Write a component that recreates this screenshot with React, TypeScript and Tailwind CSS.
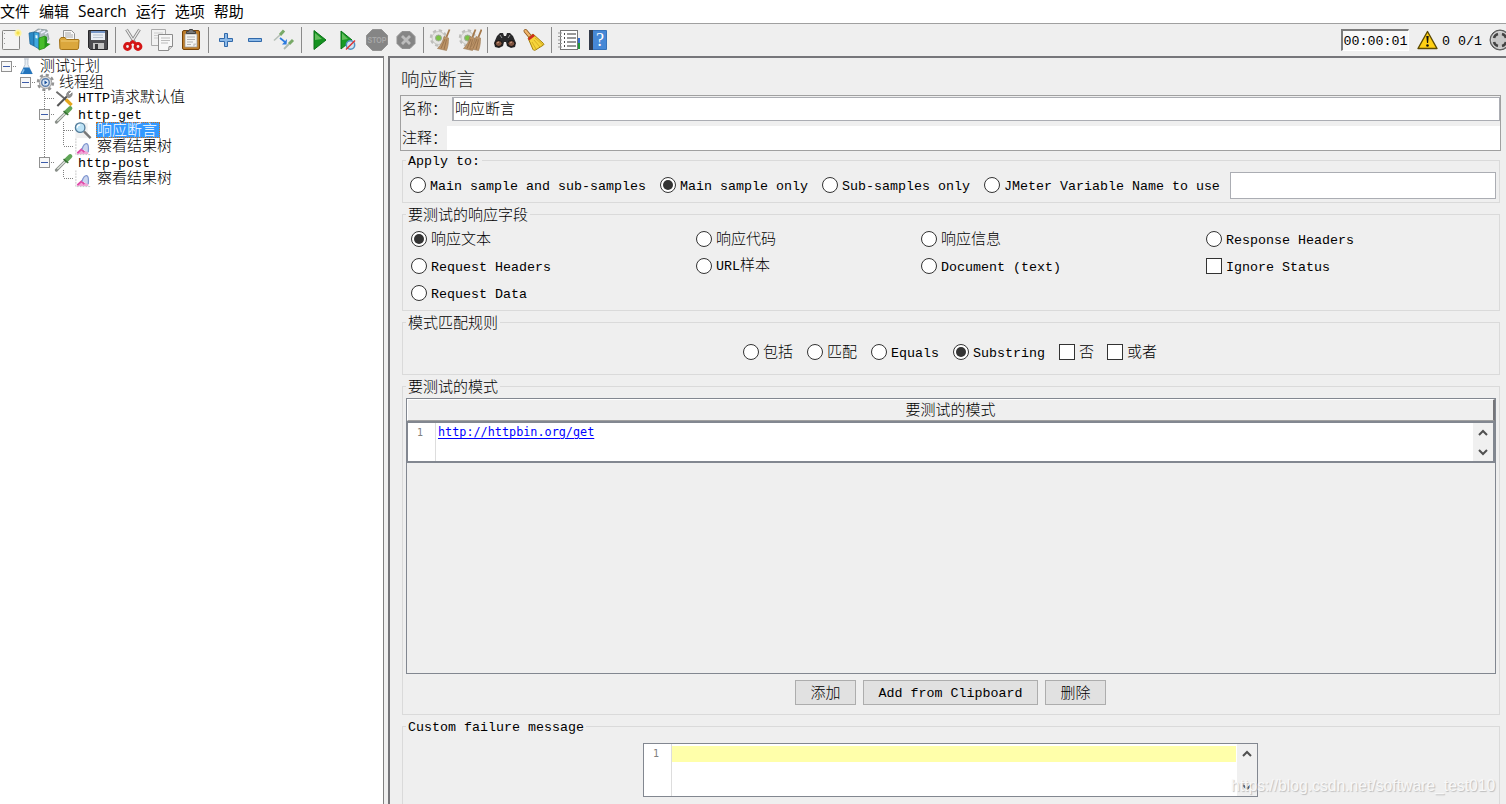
import type { ReactNode } from 'react';

type TreeRow = {
  label: string;
  icon: keyof typeof treeIcons;
  cells: string[];
  selected?: boolean;
};

/* Latin runs are set in an 8px wide mono face, Chinese runs in 15px glyphs */
function Txt({ children }: { children: string }) {
  const runs = children.split(/([\u2e80-\uffef]+)/).filter(Boolean);
  const hasHan = /[\u2e80-\uffef]/.test(children);
  return (
    <span className={`block leading-none whitespace-pre ${hasHan ? 'pb-[2px]' : 'pb-[1px]'}`}>
      {runs.map((run, i) =>
        /[\u2e80-\uffef]/.test(run) ? (
          <span key={i} className="font-['Noto_Sans_CJK_SC',sans-serif] text-[15px] leading-none font-light">
            {run}
          </span>
        ) : (
          <span key={i} className="font-['Liberation_Mono',monospace] text-[13.33px] leading-none">
            {run}
          </span>
        ),
      )}
    </span>
  );
}

function Icon({ children }: { children: ReactNode }) {
  return (
    <button className="flex h-8 w-[29px] shrink-0 items-center justify-center">
      <svg className="h-6 w-6 shrink-0" viewBox="0 0 24 24" fill="none">
        {children}
      </svg>
    </button>
  );
}

function Separator() {
  return (
    <div className="flex h-8 w-1.5 shrink-0 items-center justify-center">
      <div className="h-[26px] w-px bg-[#8a8a8a]" />
    </div>
  );
}

const broom = (
  <>
    <path d="M21.500 1.500 18.500 9" stroke="#a5784a" strokeWidth="1.800" />
    <path d="M16 8.500 20.500 10C20.500 15 20 19 18.500 22.500L9.500 20.500C13 17 15 13 16 8.500Z" fill="#bd9468" stroke="#9b7751" strokeWidth=".6" />
    <path d="M17 11 13 20.500M18.500 11.500 16 21.500" stroke="#8b6743" strokeWidth=".7" />
  </>
);

const paleGear = (
  <>
    <circle cx="9.500" cy="10" r="7.200" stroke="#bdbdba" strokeWidth="3" strokeDasharray="3.200 2.450" />
    <circle cx="9.500" cy="10" r="6.500" fill="#e6e6e3" stroke="#c6c6c2" />
    <circle cx="9.500" cy="10" r="3" fill="#7cc445" stroke="#9fa69a" />
  </>
);

function Toolbar() {
  return (
    <div className="flex h-8 w-full items-center overflow-hidden bg-[#efefef]">
      <div className="-ml-[3.5px] flex shrink-0 items-center">
        <Icon>
          <rect x="3.500" y="2.500" width="17" height="19" rx=".8" fill="#f3f3f3" stroke="#858583" />
          <path d="M5.500 5v14" stroke="#999" strokeDasharray="1 4" />
          <circle cx="19" cy="5" r="3.500" fill="#fcf3a0" />
          <circle cx="19" cy="5" r="1.700" fill="#f4df4a" />
        </Icon>
        <Icon>
          <path d="m6 4 4-3 9 1 2 9-3 4H9Z" fill="#aebcc0" stroke="#7b8a90" strokeWidth=".7" />
          <path d="m9 4 4-2m0 3 4-2m0 3 3-2" stroke="#eef" strokeWidth="1.500" />
          <path d="m1 5 5-1v14l-4-2Z" fill="#2b8ac6" stroke="#1a6397" strokeWidth=".7" />
          <path d="m6 4 5 1v16l-5-3Z" fill="#3fa9df" stroke="#1a6397" strokeWidth=".7" />
          <path d="m11 10 6-2v12l-6 2Z" fill="#47bd2a" stroke="#238311" strokeWidth=".7" />
          <path d="m17 8 2 1v6l3.500 1-5.500 4Z" fill="#24941b" />
          <path d="m7.500 7 2 .5v3l-2-.5Z" fill="#e4f4fc" />
        </Icon>
        <Icon>
          <path d="M6.500 2.500h8l3 3V13h-11Z" fill="#f8f8f8" stroke="#929292" />
          <path d="M8 5h6M8 7h8M8 9h8" stroke="#aaa" />
          <path d="M2.500 11.500 4 9.500h4l1.500 2H21c1 0 1.200.5 1 1.500l-.5 7c-.2 1-.7 1.500-1.500 1.500H4.500c-1 0-1.500-.5-1.600-1.500Z" fill="#dba73d" stroke="#a37319" />
          <path d="M4 13h17" stroke="#f0ca73" />
        </Icon>
        <Icon>
          <path d="M2.500 2.500h19v19H4.500l-2-2Z" fill="#4c4c50" stroke="#28282b" />
          <path d="M5 3h14v9H5Z" fill="#e9eef5" />
          <path d="M5 3h14v2H5Z" fill="#7596c8" />
          <path d="M7 7h10M7 9.500h10" stroke="#b8c2cf" />
          <path d="M7 15h11v6H7Z" fill="#c3c3c3" />
          <path d="M9 16h3v5H9Z" fill="#37373a" />
        </Icon>
        <Separator />
        <Icon>
          <path d="M5.500 1.500 14 15M18.500 1.500 10 15" stroke="#888" strokeWidth="3" />
          <path d="M5.500 1.500 14 15M18.500 1.500 10 15" stroke="#eee" strokeWidth="1.300" />
          <ellipse cx="6.500" cy="18.500" rx="2.900" ry="2.900" stroke="#d41515" strokeWidth="3" />
          <ellipse cx="17" cy="18.500" rx="2.900" ry="2.900" stroke="#d41515" strokeWidth="3" />
          <path d="m8 16.500 3.800-3 3.700 3" stroke="#d41515" strokeWidth="2.800" />
        </Icon>
        <Icon>
          <path d="M1.500 1.500h14v16h-14Z" fill="#f1f1f1" stroke="#aaa" />
          <path d="M4 5h9M4 7.500h9M4 10h5" stroke="#ccc" />
          <path d="M8.500 6.500h14v12l-4 4h-10Z" fill="#f7f7f7" stroke="#8c8c8c" />
          <path d="M11 10h9M11 12.500h9M11 15h7" stroke="#bbb" />
          <path d="m18.500 22.500.5-4h3.500" fill="#ddd" stroke="#8c8c8c" />
        </Icon>
        <Icon>
          <rect x="3.500" y="2.500" width="17" height="19" rx="1.500" fill="#bd7d2a" stroke="#75430a" />
          <path d="M6 6h12v13H6Z" fill="#f4f4f2" stroke="#999" strokeWidth=".7" />
          <path d="M8 9h8M8 11.500h8M8 14h6M8 16.500h4" stroke="#b3b3b3" />
          <path d="M7.500 5.500v-2h2l1-2h3l1 2h2v2Z" fill="#777" stroke="#444" />
          <path d="m14 19 .5-3.500H18" fill="#c5c5c5" />
        </Icon>
        <Separator />
        <Icon>
          <path d="M10.500 5.500h3v5h5v3h-5v5h-3v-5h-5v-3h5Z" fill="#8bb9e8" stroke="#3169aa" />
        </Icon>
        <Icon>
          <path d="M5.500 10.500h13v3h-13Z" fill="#8bb9e8" stroke="#3169aa" />
        </Icon>
        <Icon>
          <path d="M2 12.500 8 7" stroke="#b6bfb7" strokeWidth="1.600" />
          <path d="m8 7 4-4.500" stroke="#78a967" strokeWidth="3" />
          <path d="m12 21 5-5" stroke="#aebbb0" strokeWidth="1.800" />
          <path d="m17 16 4-4" stroke="#78a967" strokeWidth="3" />
          <path d="m8 10 5 4" stroke="#2c7be0" strokeWidth="1.700" />
          <path d="m15 11-.5 5.500H10Z" fill="#2c7be0" />
        </Icon>
        <Separator />
        <Icon>
          <path d="M7 2.500 19 12 7 21.500Z" fill="#159220" stroke="#087315" />
          <path d="m8 5 7 6-7 1Z" fill="#63bd5c" />
        </Icon>
        <Icon>
          <path d="M5 3 16 12 5 21Z" fill="#179b25" stroke="#087315" />
          <path d="m6 5 6 6-6 1Z" fill="#63bd5c" />
          <circle cx="14.500" cy="17" r="4.200" fill="#d4e4f2" stroke="#5191c3" strokeWidth="1.500" />
          <path d="m10 21.500 9-9" stroke="#df3434" strokeWidth="1.400" />
        </Icon>
        <Icon>
          <path d="M7.500 1.500h9l6 6v9l-6 6h-9l-6-6v-9Z" fill="#858585" stroke="#929292" />
          <text x="12" y="15.300" textAnchor="middle" fontSize="9" textLength="19" lengthAdjust="spacingAndGlyphs" fontWeight="bold" fontFamily="Liberation Sans" fill="#a8a8a8">STOP</text>
        </Icon>
        <Icon>
          <path d="M8 3.500h8l5 5v7l-5 5H8l-5-5v-7Z" fill="#858585" stroke="#929292" />
          <path d="m8 8 8 8M16 8l-8 8" stroke="#bcbcbc" strokeWidth="2.800" />
        </Icon>
        <Separator />
        <Icon>
          {paleGear}
          <g transform="translate(-1 0)">{broom}</g>
        </Icon>
        <Icon>
          {paleGear}
          <g transform="translate(-4 0)">{broom}</g>
          <g transform="translate(2 0)">{broom}</g>
        </Icon>
        <Separator />
        <Icon>
          <path d="M7 5h3l1 3h2l1-3h3l3 3 3 7-1 4-4 1-4-2-1-4h-2l-1 4-4 2-4-1-1-4 3-7Z" fill="#29292b" />
          <path d="m7 7 2 3M17 7l-2 3" stroke="#999" />
          <ellipse cx="5.700" cy="15.500" rx="3.500" ry="3" fill="#805540" stroke="#111" />
          <ellipse cx="18.300" cy="15.500" rx="3.500" ry="3" fill="#805540" stroke="#111" />
          <path d="m4 15 2-1M17 15l2-1" stroke="#d6a388" />
        </Icon>
        <Icon>
          <path d="m3.500 3 5 6" stroke="#8d571d" strokeWidth="4" strokeLinecap="round" />
          <path d="m3.500 3 5 6" stroke="#f0b56b" strokeWidth="2.400" strokeLinecap="round" />
          <path d="m6 10 5-4 10 9c1 1 1 1.500.5 2l-8 5c-1 .5-2 .4-2.500-.5Z" fill="#f5d43a" stroke="#a37f0b" />
          <path d="m6 10 5-4 2 2-6 4.500Z" fill="#ce2d20" />
          <path d="m10 14 4 7m-2-9 6 7m-5-9 8 7" stroke="#d1a51b" strokeWidth=".8" />
        </Icon>
        <Separator />
        <Icon>
          <path d="M20 10h3v5h-3Z" fill="#346fd1" />
          <path d="M20 15h3v6h-3Z" fill="#229939" />
          <rect x="3.500" y="2.500" width="17" height="19" fill="#fff" stroke="#777" />
          <path d="M7 6h1m-1 4h1m-1 4h1m-1 4h1" stroke="#111" strokeWidth="1.500" />
          <path d="M10 6h9M10 10h9M10 14h9M10 18h9" stroke="#333" strokeWidth="1.100" />
          <path d="M1 5h4M1 8.500h4M1 12h4M1 15.500h4M1 19h4" stroke="#999" />
        </Icon>
        <Icon>
          <path d="M3.500 2.500h17v19h-17Z" fill="#4688d6" stroke="#3672b9" />
          <path d="M3 2h4v20H3Z" fill="#333b4a" />
          <text x="14" y="18" textAnchor="middle" fontSize="18" fontFamily="Liberation Serif" fill="#fff">?</text>
        </Icon>
      </div>

      <div className="ml-auto -mr-[5px] flex shrink-0 items-center">
        <div className="flex h-[22px] w-[68px] items-center justify-center border border-t-2 border-l-2 border-t-[#7b7b7b] border-r-white border-b-white border-l-[#7b7b7b] bg-[#f8f8f8]">
          <Txt>00:00:01</Txt>
        </div>
        <svg className="ml-2 h-5 w-[21px]" viewBox="0 0 21 20">
          <path d="M10.500 1.500 20 18.500H1Z" fill="#ffd013" stroke="#5d4a00" strokeWidth="1.400" strokeLinejoin="round" />
          <path d="M9.300 6h2.400l-.6 7H10Z" fill="#111" />
          <circle cx="10.500" cy="15.500" r="1.300" fill="#111" />
        </svg>
        <div className="ml-1 flex w-11 gap-2">
          <Txt>0</Txt>
          <Txt>0/1</Txt>
        </div>
        <svg className="ml-[3px] h-[22px] w-[22px]" viewBox="0 0 22 22" fill="none">
          <circle cx="11" cy="11" r="10" fill="#777" stroke="#555" />
          <circle cx="11" cy="11" r="8.500" fill="#c7c7c7" stroke="#e0e0e0" />
          <path d="M5 9c.5-2 2-3.500 4-4M13 5c2 .5 3.500 2 4 4M17 13c-.5 2-2 3.500-4 4M9 17c-2-.5-3.500-2-4-4" stroke="#444" strokeWidth="2.600" />
        </svg>
      </div>
    </div>
  );
}

const treeIcons = {
  flask: (
    <>
      <path d="M8 2h5M9 2v6L4.500 17.500h12L12 8V2" fill="#e8eef4" stroke="#b9c3ce" />
      <path d="m7.500 11-3.500 7h13l-3.500-7Z" fill="#2375bd" />
      <path d="m8 13-2 4" stroke="#88c1ed" strokeWidth="1.500" />
    </>
  ),
  gear: (
    <>
      <circle cx="10.500" cy="10" r="7.800" stroke="#949494" strokeWidth="2.800" strokeDasharray="3.200 2.930" />
      <circle cx="10.500" cy="10" r="6.500" fill="#d9d9d9" stroke="#9d9d9d" />
      <circle cx="10.500" cy="10" r="4" fill="#dfeaf6" stroke="#5a7dac" strokeWidth="1.500" />
      <path d="m9.500 8 3 2-3 2Z" fill="#174f9c" />
    </>
  ),
  tools: (
    <>
      <path d="m2 3 12 10" stroke="#6c6c6c" strokeWidth="2" />
      <path d="M3 18 13 8" stroke="#555" strokeWidth="2.200" />
      <path d="M17 2.500 14.500 5l1.500 1.500L18.500 4c.5 3-1 5-4 5-2-1-2.500-3-1-5 1-1.500 2-2 3.500-1.500Z" fill="#999" stroke="#666" strokeWidth=".7" />
      <path d="m12 11 6 6" stroke="#e4a61c" strokeWidth="3.500" />
    </>
  ),
  dropper: (
    <>
      <path d="m2 18 9-9" stroke="#8a908a" strokeWidth="3.200" strokeLinecap="round" />
      <path d="m3 17 8-8" stroke="#e1e6e0" strokeWidth="1.300" />
      <path d="m12.500 7.500 4-4" stroke="#5fa556" strokeWidth="4.600" strokeLinecap="round" />
      <path d="m9.500 6.500 5 4" stroke="#366e34" strokeWidth="1.500" />
    </>
  ),
  magnifier: (
    <>
      <path d="M2 2h13v16H2Z" fill="#f0f0f0" />
      <path d="m11 11 7 7" stroke="#777" strokeWidth="2.500" />
      <circle cx="7" cy="7" r="5" fill="#bde3f7" stroke="#517b99" strokeWidth="1.400" />
      <path d="M4 7c0-2 1-3 3-3" stroke="#fff" strokeWidth="1.300" />
    </>
  ),
  chart: (
    <>
      <path d="M2.500 1.500v17h16" stroke="#c4c4c4" strokeDasharray="2 1" />
      <path d="m4 17 4.500-4 3 2.500 4-3V18H4Z" fill="#f0a6d6" />
      <path d="m4 17 4.500-4 3 3" stroke="#df4aa8" strokeWidth="2" />
      <path d="M9 13c1-4 3-6.500 5-6 2 .7 2 4.500 1.500 9" fill="#ccd6ef" stroke="#8298d0" strokeWidth="1.300" />
    </>
  ),
};

/* guide cells: box = expander, boxUp = expander hanging on a line, tee / end / bar = dotted lines */
const rows: TreeRow[] = [
  { label: '测试计划', icon: 'flask', cells: ['box'] },
  { label: '线程组', icon: 'gear', cells: ['none', 'box'] },
  { label: 'HTTP请求默认值', icon: 'tools', cells: ['none', 'none', 'tee'] },
  { label: 'http-get', icon: 'dropper', cells: ['none', 'none', 'boxLine'] },
  { label: '响应断言', icon: 'magnifier', cells: ['none', 'none', 'bar', 'tee'], selected: true },
  { label: '察看结果树', icon: 'chart', cells: ['none', 'none', 'bar', 'end'] },
  { label: 'http-post', icon: 'dropper', cells: ['none', 'none', 'boxUp'] },
  { label: '察看结果树', icon: 'chart', cells: ['none', 'none', 'none', 'end'] },
];

function GuideCell({ kind }: { kind: string }) {
  const isBox = kind.startsWith('box');
  return (
    <svg className="h-4 w-[19px] shrink-0" viewBox="0 0 19 16" fill="none">
      {(kind === 'bar' || kind === 'tee' || kind === 'boxLine') && (
        <path d="M9.500 0v16" stroke="#808080" strokeDasharray="1 1" />
      )}
      {(kind === 'end' || kind === 'boxUp') && <path d="M9.500 0v8" stroke="#808080" strokeDasharray="1 1" />}
      {kind !== 'none' && kind !== 'bar' && <path d="M10 8.500h9" stroke="#808080" strokeDasharray="1 1" />}
      {isBox && (
        <>
          <rect x="4.500" y="3.500" width="10" height="10" fill="#f8f8f8" stroke="#919191" />
          <path d="M6 8.500h7" stroke="#3c5ba9" />
        </>
      )}
    </svg>
  );
}

function Tree() {
  return (
    <div className="h-full w-[384px] shrink-0 overflow-hidden border-t-2 border-r border-t-[#76767a] border-r-[#808080] bg-white">
      {rows.map((row, i) => (
        <div key={i} className="-ml-[3px] flex h-4 items-center">
          {row.cells.map((kind, j) => (
            <GuideCell key={j} kind={kind} />
          ))}
          <svg className="h-[19px] w-5 shrink-0" viewBox="0 0 20 20" fill="none">
            {treeIcons[row.icon]}
          </svg>
          <div
            className={
              row.selected
                ? 'ml-[3px] flex h-4 w-16 items-center border border-dotted border-[#d0701c] bg-[#3399ff] text-white'
                : 'ml-1 flex h-4 items-center text-black'
            }
          >
            <Txt>{row.label}</Txt>
          </div>
        </div>
      ))}
    </div>
  );
}

function Radio({ label, checked }: { label: string; checked?: boolean }) {
  return (
    <label className="flex h-4 items-center gap-1">
      <span className="flex h-4 w-4 shrink-0 items-center justify-center rounded-full border border-[#333] bg-white">
        {checked && <span className="h-2.5 w-2.5 rounded-full bg-[#333]" />}
      </span>
      <Txt>{label}</Txt>
    </label>
  );
}

function Check({ label }: { label: string }) {
  return (
    <label className="flex h-4 items-center gap-1">
      <span className="h-4 w-4 shrink-0 border border-[#333] bg-white" />
      <Txt>{label}</Txt>
    </label>
  );
}

function Group({ title, className, children }: { title: string; className: string; children: ReactNode }) {
  return (
    <fieldset className={`ml-0.5 w-[1098px] border border-[#dadada] ${className}`}>
      <legend className="ml-[3px] flex h-[17px] items-center px-0.5">
        <Txt>{title}</Txt>
      </legend>
      {children}
    </fieldset>
  );
}

function ScrollBar() {
  return (
    <div className="flex w-5 shrink-0 flex-col items-center justify-between bg-[#f0f0f0] pt-1.5 pb-[5px]">
      <svg className="h-2 w-[10px]" viewBox="0 0 10 8" fill="none">
        <path d="m1 6 4-4 4 4" stroke="#505050" strokeWidth="2" />
      </svg>
      <svg className="h-2 w-[10px]" viewBox="0 0 10 8" fill="none">
        <path d="m1 2 4 4 4-4" stroke="#505050" strokeWidth="2" />
      </svg>
    </div>
  );
}

function Gutter() {
  return (
    <div className="w-7 shrink-0 border-r border-[#dddddd] pt-[3px] pl-[9px] font-['DejaVu_Sans_Mono',monospace] text-[10px] leading-[14px] text-[#808080]">
      1
    </div>
  );
}

function Button({ label, className }: { label: string; className: string }) {
  return (
    <button className={`flex h-[25px] items-center justify-center border border-[#adadad] bg-[#e1e1e1] ${className}`}>
      <Txt>{label}</Txt>
    </button>
  );
}

function AssertionPanel() {
  return (
    <div className="h-full grow overflow-hidden border-t-2 border-l-2 border-t-[#76767a] border-l-[#76767a] bg-[#efefef] pl-[10px]">
      <h1 className="flex h-[37px] items-center pt-[3px] pl-px font-['Noto_Sans_CJK_SC',sans-serif] text-[18.5px] leading-none font-light text-[#222]">
        响应断言
      </h1>

      <div className="h-14 w-[1101px] border border-[#a0a0a0] pt-px">
        <div className="flex h-6 items-center">
          <div className="w-[51px] pl-px">
            <Txt>名称：</Txt>
          </div>
          <div className="flex h-6 grow items-center border border-l-2 border-[#abadb3] bg-white pl-px">
            <Txt>响应断言</Txt>
          </div>
        </div>
        <div className="mt-[5px] flex h-6 items-center">
          <div className="w-[46px] pl-px">
            <Txt>注释：</Txt>
          </div>
          <div className="h-6 grow bg-white" />
        </div>
      </div>

      <Group title="Apply to:" className="mt-px h-[51px]">
        <div className="flex h-8 items-center gap-[14px] pl-[7px]">
          <Radio label="Main sample and sub-samples" />
          <Radio label="Main sample only" checked />
          <Radio label="Sub-samples only" />
          <Radio label="JMeter Variable Name to use" />
          <div className="-ml-1 h-[27px] w-[266px] border border-[#abadb3] bg-white" />
        </div>
      </Group>

      <Group title="要测试的响应字段" className="mt-[3px] h-[105px]">
        <div className="grid grid-cols-[285px_225px_285px_1fr] gap-y-[11px] pt-2 pl-2">
          <Radio label="响应文本" checked />
          <Radio label="响应代码" />
          <Radio label="响应信息" />
          <Radio label="Response Headers" />
          <Radio label="Request Headers" />
          <Radio label="URL样本" />
          <Radio label="Document (text)" />
          <Check label="Ignore Status" />
          <Radio label="Request Data" />
        </div>
      </Group>

      <Group title="模式匹配规则" className="mt-[3px] h-[61px]">
        <div className="flex gap-[14px] pt-[13px] pl-[340px]">
          <Radio label="包括" />
          <Radio label="匹配" />
          <Radio label="Equals" />
          <Radio label="Substring" checked />
          <Check label="否" />
          <div className="-ml-px">
            <Check label="或者" />
          </div>
        </div>
      </Group>

      <Group title="要测试的模式" className="mt-[3px] h-[337px]">
        <div className="mt-[3px] ml-[3px] h-[276px] w-[1090px] border border-[#828790]">
          <div className="flex h-[22px] items-center justify-center border border-r-2 border-t-white border-r-[#76767a] border-b-[#a0a0a0] border-l-white">
            <Txt>要测试的模式</Txt>
          </div>
          <div className="flex h-[42px] border-2 border-l border-[#828790] bg-white">
            <Gutter />
            <div className="grow pt-px pl-0.5">
              <a className="block font-['DejaVu_Sans_Mono',monospace] text-[11.8px] leading-4 whitespace-pre text-[#0000ff] underline underline-offset-2">
                http://httpbin.org/get
              </a>
            </div>
            <ScrollBar />
          </div>
        </div>
        <div className="mt-1.5 ml-[392px] flex gap-[7px]">
          <Button label="添加" className="w-[61px]" />
          <Button label="Add from Clipboard" className="w-[175px]" />
          <Button label="删除" className="w-[61px]" />
        </div>
      </Group>

      <Group title="Custom failure message" className="mt-[3px] h-[110px]">
        <div className="mt-2 ml-[240px] flex h-[54px] w-[615px] border border-[#828790] bg-white">
          <Gutter />
          <div className="mt-0.5 mr-px h-4 grow bg-[#ffffaa]" />
          <ScrollBar />
        </div>
      </Group>
    </div>
  );
}

export default function App() {
  return (
    <div className="relative flex h-[804px] w-[1506px] flex-col overflow-hidden bg-[#efefef] text-black">
      <nav className="flex h-[23px] shrink-0 items-center gap-[9px] bg-white font-['Open_Sans','Noto_Sans_CJK_SC',sans-serif] text-[15px] leading-none">
        <span>文件</span>
        <span>编辑</span>
        <span className="text-[15.4px]">Search</span>
        <span>运行</span>
        <span>选项</span>
        <span>帮助</span>
      </nav>
      <div className="h-[33px] shrink-0 border-t border-[#a0a0a0]">
        <Toolbar />
      </div>
      <div className="flex h-[748px] shrink-0 gap-1">
        <Tree />
        <AssertionPanel />
      </div>
      <div className="absolute top-[777px] left-[1231px] font-['Liberation_Sans',sans-serif] text-[15.7px] leading-[18px] whitespace-nowrap text-[#f8f8f8] [text-shadow:1px_1px_1px_#bdbdbd]">
        https://blog.csdn.net/software_test010
      </div>
    </div>
  );
}
